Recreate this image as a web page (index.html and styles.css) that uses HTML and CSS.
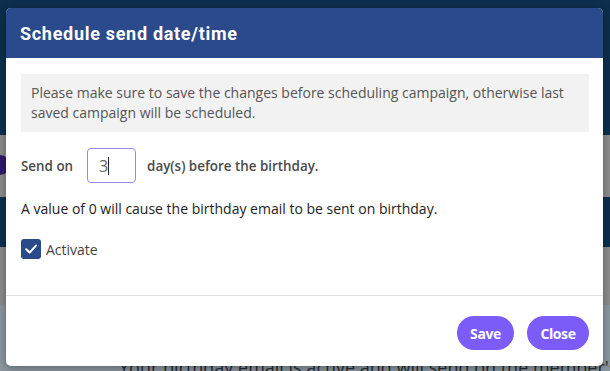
FILE: index.html
```html
<!DOCTYPE html>
<html>
<head>
<meta charset="utf-8">
<link rel="stylesheet" href="styles.css">
</head>
<body>
<div class="page">
  <div class="topbar"></div>
  <div class="band band-a"><span class="avatar"></span></div>
  <div class="nav"></div>
  <div class="band band-b"></div>
  <div class="content"><p class="bg-text">Your birthday email is active and will send on the member's</p></div>
</div>

<div class="modal">
  <div class="modal-header">
    <h1 class="modal-title">Schedule send date/time</h1>
  </div>
  <div class="modal-body">
    <div class="notice">Please make sure to save the changes before scheduling campaign, otherwise last saved campaign will be scheduled.</div>
    <div class="send-row">
      <span class="label">Send on</span>
      <div class="num-input"><span class="num-val">3</span><span class="caret"></span></div>
      <span class="label">day(s) before the birthday.</span>
    </div>
    <p class="hint">A value of 0 will cause the birthday email to be sent on birthday.</p>
    <label class="check">
      <span class="box"><svg width="14" height="14" viewBox="0 0 14 14"><path d="M2.2 7.3 L5.6 10.6 L11.9 3.6" fill="none" stroke="#fff" stroke-width="2.1" stroke-linecap="round" stroke-linejoin="round"/></svg></span>
      <span class="check-label">Activate</span>
    </label>
  </div>
  <div class="modal-footer">
    <button class="btn btn-save">Save</button>
    <button class="btn btn-close">Close</button>
  </div>
</div>
</body>
</html>
```
FILE: styles.css
```css
* { box-sizing: border-box; }
html, body { margin: 0; padding: 0; }
body {
  width: 610px;
  height: 371px;
  overflow: hidden;
  font-family: "Open Sans", "Liberation Sans", sans-serif;
  position: relative;
}
.page { width: 610px; height: 371px; display: flex; flex-direction: column; }
.topbar { height: 135px; background: #0d2f4d; }
.band { background: #8b8b8b; position: relative; }
.band-a { height: 62px; }
.band-b { height: 58px; }
.nav { height: 50px; background: #0d2f4d; }
.content { flex: 1; background: #8a969f; padding-left: 119px; overflow: hidden; }
.avatar {
  position: absolute; left: -10px; top: 20px;
  width: 20px; height: 20px; border-radius: 50%;
  background: #2e1a6b;
}
.bg-text {
  margin: 0; padding-top: 52px;
  font-size: 18px; line-height: 20px; color: #2c2c2c; white-space: nowrap;
}

.modal {
  position: absolute;
  left: 6px; top: 8px;
  width: 597px; height: 358px;
  background: #fff;
  border-radius: 5px;
  overflow: hidden;
  box-shadow: 0 2px 8px rgba(0,0,0,0.35);
  display: flex; flex-direction: column;
}
.modal-header {
  height: 50px;
  background: #2b4a8c;
  display: flex; align-items: center;
  padding-left: 14px;
}
.modal-title {
  margin: 0;
  font-family: "Roboto", "Liberation Sans", sans-serif;
  font-weight: 700;
  font-size: 18px;
  color: #fff;
  letter-spacing: 0.7px;
}
.modal-body {
  padding: 16px 14px 36px 15px;
  border-bottom: 1px solid #e2e2e2;
}
.notice {
  background: #f2f2f2;
  padding: 9px 10px;
  font-size: 14px;
  line-height: 20px;
  color: #555;
  height: 58px;
}
.send-row {
  display: flex; align-items: center;
  margin-top: 16px;
  height: 35px;
}
.label { font-size: 13.4px; font-weight: 600; color: #4a4a4a; }
.num-input {
  width: 49px; height: 35px;
  margin: 0 11px 0 14px;
  border: 1px solid #9a85f5;
  border-radius: 4px;
  display: flex; align-items: center;
  padding-left: 11px;
  font-size: 16px; color: #666;
}
.caret { width: 1px; height: 18px; background: #222; }
.hint {
  margin: 16px 0 0;
  font-size: 14px; line-height: 20px; color: #222;
}
.check {
  display: flex; align-items: center;
  margin-top: 20px;
}
.box {
  width: 20px; height: 20px;
  background: #2b4a8c; border-radius: 3px;
  display: flex; align-items: center; justify-content: center;
}
.check-label { margin-left: 5px; font-size: 14px; font-weight: 500; color: #444; }
.modal-footer {
  flex: 1;
  display: flex; justify-content: flex-end; align-items: flex-start;
  padding: 20px 14px 0 0;
  gap: 13px;
}
.btn {
  height: 34px;
  border: none;
  border-radius: 17px;
  background: #7b5cf9;
  color: #fff;
  font-family: "Open Sans", "Liberation Sans", sans-serif;
  font-weight: 700;
  font-size: 14px;
  letter-spacing: -0.4px;
  padding: 0;
}
.btn-save { width: 57px; }
.btn-close { width: 62px; }
```
